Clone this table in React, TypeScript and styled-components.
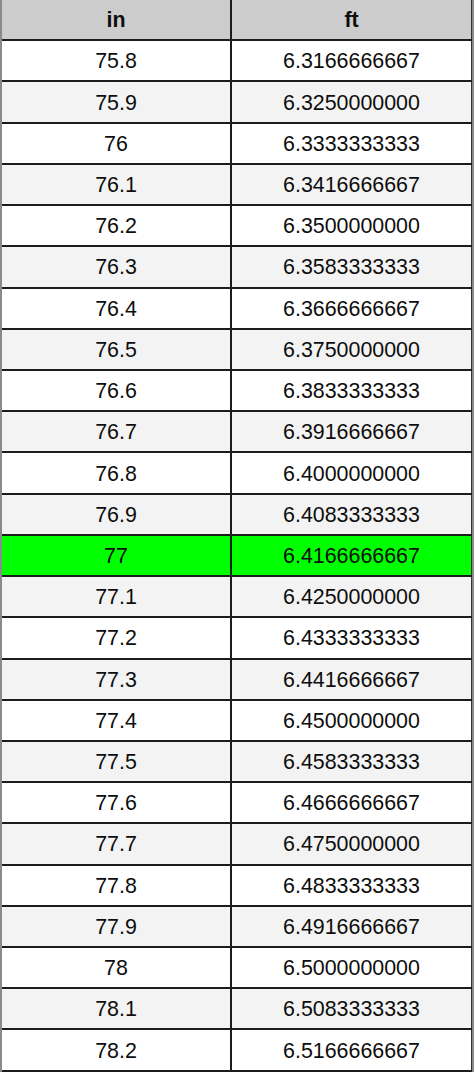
import React from 'react';
import styled, { createGlobalStyle } from 'styled-components';

const GlobalStyle = createGlobalStyle`
  html, body {
    margin: 0;
    padding: 0;
    background: #ffffff;
  }
  body {
    font-family: 'Liberation Sans', Arial, sans-serif;
  }
`;

const Table = styled.div`
  width: 474px;
  box-sizing: border-box;
  border-left: 2px solid #8a8a8a;
  border-right: 2px solid #8a8a8a;
`;

const Row = styled.div<{ $tone: 'head' | 'white' | 'gray' | 'hit' }>`
  display: grid;
  grid-template-columns: 230px 1fr;
  height: 41.23px;
  box-sizing: border-box;
  border-bottom: 2px solid #1c1c1c;
  background: ${({ $tone }) =>
    $tone === 'head'
      ? '#cccccc'
      : $tone === 'hit'
      ? '#00ff00'
      : $tone === 'gray'
      ? '#f3f3f3'
      : '#ffffff'};
  font-weight: ${({ $tone }) => ($tone === 'head' ? 'bold' : 'normal')};
`;

const Cell = styled.div`
  display: flex;
  align-items: center;
  justify-content: center;
  font-size: 21.4px;
  color: #0d0d0d;
  padding-top: 2px;
  box-sizing: border-box;

  &:first-child {
    border-right: 2px solid #1c1c1c;
  }
  &:last-child {
    border-right: 1px solid #333333;
  }
`;

const rows: [string, string][] = [
  ['75.8', '6.3166666667'],
  ['75.9', '6.3250000000'],
  ['76', '6.3333333333'],
  ['76.1', '6.3416666667'],
  ['76.2', '6.3500000000'],
  ['76.3', '6.3583333333'],
  ['76.4', '6.3666666667'],
  ['76.5', '6.3750000000'],
  ['76.6', '6.3833333333'],
  ['76.7', '6.3916666667'],
  ['76.8', '6.4000000000'],
  ['76.9', '6.4083333333'],
  ['77', '6.4166666667'],
  ['77.1', '6.4250000000'],
  ['77.2', '6.4333333333'],
  ['77.3', '6.4416666667'],
  ['77.4', '6.4500000000'],
  ['77.5', '6.4583333333'],
  ['77.6', '6.4666666667'],
  ['77.7', '6.4750000000'],
  ['77.8', '6.4833333333'],
  ['77.9', '6.4916666667'],
  ['78', '6.5000000000'],
  ['78.1', '6.5083333333'],
  ['78.2', '6.5166666667'],
];

const App: React.FC = () => {
  return (
    <>
      <GlobalStyle />
      <Table>
        <Row $tone="head">
          <Cell>in</Cell>
          <Cell>ft</Cell>
        </Row>
        {rows.map(([inch, ft], i) => (
          <Row key={inch} $tone={inch === '77' ? 'hit' : i % 2 === 1 ? 'gray' : 'white'}>
            <Cell>{inch}</Cell>
            <Cell>{ft}</Cell>
          </Row>
        ))}
      </Table>
    </>
  );
};

export default App;
